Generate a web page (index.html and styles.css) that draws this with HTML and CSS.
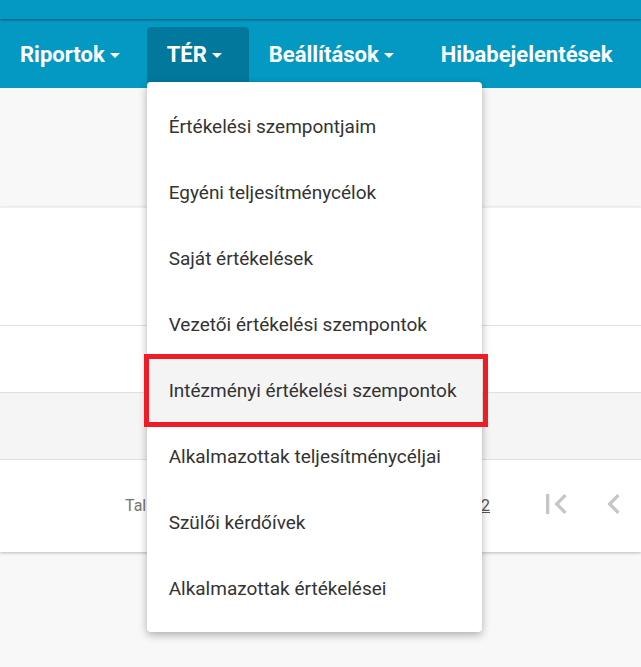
FILE: index.html
```html
<!DOCTYPE html>
<html lang="hu">
<head>
<meta charset="utf-8">
<title>TÉR</title>
<link rel="stylesheet" href="styles.css">
</head>
<body>
<div class="topstrip"></div>
<nav class="nav">
  <div class="nav-item">Riportok<span class="caret"></span></div>
  <div class="nav-item active">TÉR<span class="caret"></span>
    <ul class="dropdown">
      <li>Értékelési szempontjaim</li>
      <li>Egyéni teljesítménycélok</li>
      <li>Saját értékelések</li>
      <li>Vezetői értékelési szempontok</li>
      <li class="hover">Intézményi értékelési szempontok<span class="mark"></span></li>
      <li>Alkalmazottak teljesítménycéljai</li>
      <li>Szülői kérdőívek</li>
      <li>Alkalmazottak értékelései</li>
    </ul>
  </div>
  <div class="nav-item">Beállítások<span class="caret"></span></div>
  <div class="nav-item">Hibabejelentések</div>
</nav>
<main class="main">
  <div class="spacer"></div>
  <section class="card">
    <div class="row r1"></div>
    <div class="row r2"></div>
    <div class="row r3"></div>
    <div class="footer">
      <span class="info">Találatok</span>
      <span class="count">2</span>
      <svg class="pi first" width="40" height="40" viewBox="0 0 24 24"><path d="M18.41 16.59L13.82 12l4.59-4.59L17 6l-6 6 6 6zM6 6h2v12H6z" fill="#c6c6c6"/></svg>
      <svg class="pi prev" width="40" height="40" viewBox="0 0 24 24"><path d="M15.41 16.59L10.83 12l4.58-4.59L14 6l-6 6 6 6z" fill="#c6c6c6"/></svg>
    </div>
  </section>
</main>
</body>
</html>
```
FILE: styles.css
```css
html, body {
  margin: 0;
  padding: 0;
}
body {
  background: #f8f8f8;
  font-family: Roboto, "Noto Sans", sans-serif;
  width: 641px;
  height: 667px;
  overflow: hidden;
}
.topstrip {
  height: 19px;
  background: #0399c3;
  box-shadow: 0 1px 2px rgba(0, 0, 0, 0.45);
  position: relative;
  z-index: 4;
}
.nav {
  height: 69px;
  background: #0399c3;
  display: flex;
  align-items: flex-start;
  position: relative;
  z-index: 3;
}
.nav-item {
  position: relative;
  height: 55px;
  box-sizing: border-box;
  display: flex;
  align-items: center;
  padding: 0 27px 0 20px;
  margin-top: 8px;
  color: #fff;
  font-weight: 700;
  font-size: 22px;
  border-radius: 4px 4px 0 0;
}
.nav-item.active {
  background: #02799c;
}
.caret {
  display: inline-block;
  width: 0;
  height: 0;
  border-left: 5px solid transparent;
  border-right: 5px solid transparent;
  border-top: 5px solid #fff;
  margin-left: 5px;
  margin-top: 2px;
}
.dropdown {
  position: absolute;
  top: 100%;
  left: 0;
  width: 335px;
  margin: 0;
  padding: 11px 0;
  list-style: none;
  background: #fff;
  border-radius: 4px;
  box-shadow: 0 3px 8px rgba(0, 0, 0, 0.3);
  z-index: 5;
}
.dropdown li {
  position: relative;
  height: 66px;
  display: flex;
  align-items: center;
  padding-left: 22px;
  font-weight: 400;
  font-size: 19px;
  color: #333;
  white-space: nowrap;
}
.dropdown li.hover {
  background: #f4f4f4;
}
.mark {
  position: absolute;
  left: -3px;
  right: -6px;
  top: -3px;
  bottom: -4px;
  border: 5px solid #ee1c25;
}
.spacer {
  height: 119px;
}
.card {
  background: #fff;
  box-shadow: 0 1px 3px rgba(0, 0, 0, 0.25);
  border-top: 1px solid #efefef;
}
.row {
  border-bottom: 1px solid #e0e0e0;
}
.r1 { height: 117px; }
.r2 { height: 66px; }
.r3 { height: 66px; background: #f5f5f5; }
.footer {
  height: 92px;
  position: relative;
}
.info {
  position: absolute;
  left: 125px;
  top: 36px;
  width: 21px;
  overflow: hidden;
  white-space: nowrap;
  font-size: 16px;
  color: #7a7470;
}
.count {
  position: absolute;
  left: 481px;
  top: 36px;
  font-size: 16px;
  color: #555;
  text-decoration: underline;
}
.pi {
  position: absolute;
  top: 24px;
}
.pi.first { left: 536px; }
.pi.prev { left: 594px; }
```
